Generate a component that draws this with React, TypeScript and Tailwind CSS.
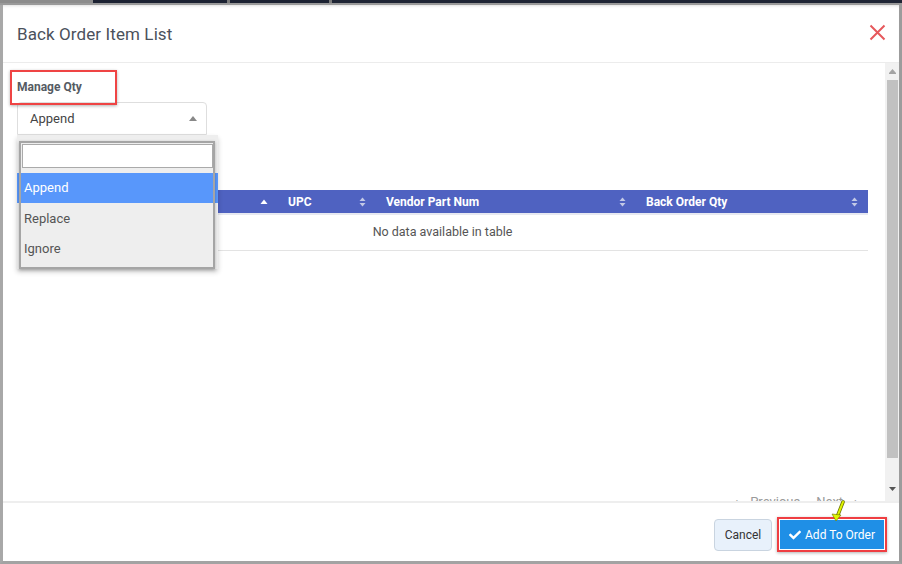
import { FaCheck } from "react-icons/fa";

function SortBoth() {
  return (
    <svg width="7" height="10" viewBox="0 0 7 10" className="shrink-0">
      <path d="M3.5 0.5 L6.5 4 L0.5 4 Z" fill="#c3c9e6" />
      <path d="M3.5 9.5 L6.5 6 L0.5 6 Z" fill="#c3c9e6" />
    </svg>
  );
}

function SortUp() {
  return (
    <svg width="8" height="6" viewBox="0 0 8 6" className="shrink-0">
      <path d="M4 0.5 L7.5 5 L0.5 5 Z" fill="#ffffff" />
    </svg>
  );
}

const columns = [
  { label: "", width: "w-[261px]", up: true },
  { label: "UPC", width: "w-[98px]", up: false },
  { label: "Vendor Part Num", width: "w-[260px]", up: false },
  { label: "Back Order Qty", width: "flex-1", up: false },
];

export default function App() {
  return (
    <div className="relative w-[902px] h-[564px] flex flex-col bg-white overflow-hidden font-['Roboto','Liberation_Sans',sans-serif]">
      {/* screen strip above the modal */}
      <div className="h-[3px] flex shrink-0">
        <div className="w-[93px] bg-[#8c8c8c]" />
        <div className="w-[134px] bg-[#1c2232]" />
        <div className="w-[3px] bg-[#7a7a7a]" />
        <div className="w-[99px] bg-[#1c2232]" />
        <div className="w-[3px] bg-[#7a7a7a]" />
        <div className="flex-1 bg-[#1f2535]" />
      </div>
      <div className="h-[2px] bg-[#9a9a9a] shrink-0" />

      <div className="flex-1 flex flex-col border-l-[3px] border-r-[3px] border-b-[3px] border-l-[#a8a8a8] border-r-[#9c9c9c] border-b-[#a3a3a3] min-h-0">
        {/* header */}
        <div className="h-[58px] shrink-0 flex items-center justify-between pt-[2px] pl-[14px] pr-[13px] border-b border-[#ececec] shadow-[inset_0_3px_3px_-2px_rgba(0,0,0,0.12)]">
          <h1 className="text-[17px] text-[#4b515c] tracking-[0.1px]">Back Order Item List</h1>
          <svg width="17" height="17" viewBox="0 0 17 17" className="mt-[-4px]">
            <path d="M1.5 1.5 L15.5 15.5 M15.5 1.5 L1.5 15.5" stroke="#e6585c" strokeWidth="2" />
          </svg>
        </div>

        {/* body */}
        <div className="relative h-[438px] shrink-0 flex overflow-hidden">
          <div className="flex-1 flex flex-col pl-[14px] pr-[16px] pt-[16px]">
            <div className="h-[16px] text-[12px] font-bold text-[#555b63] leading-[16px]">Manage Qty</div>

            <div className="relative mt-[7px] w-[190px]">
              <div className="h-[33px] flex items-center justify-between pl-[12px] pr-[9px] border border-[#dedede] rounded-t-[4px] bg-white">
                <span className="text-[13px] text-[#444]">Append</span>
                <svg width="8" height="5" viewBox="0 0 8 5">
                  <path d="M4 0 L8 5 L0 5 Z" fill="#888" />
                </svg>
              </div>

              {/* open dropdown */}
              <div className="absolute left-0 top-full z-20 w-[201px] h-[134px] bg-[#eeeeee] shadow-[0_3px_5px_rgba(0,0,0,0.2)] pt-[9px]">
                <div className="mx-[5px] h-[24px] bg-white border border-[#aaaaaa]" />
                <div className="mt-[5px] h-[30px] flex items-center pl-[7px] bg-[#5897fb] text-white text-[13px]">Append</div>
                <div className="h-[31px] flex items-center pl-[7px] text-[#555] text-[13px]">Replace</div>
                <div className="h-[30px] flex items-center pl-[7px] text-[#555] text-[13px]">Ignore</div>
                <div className="absolute left-[2px] top-[6px] right-[3px] bottom-0 border-2 border-[#a5a5a5] shadow-[0_1px_3px_rgba(0,0,0,0.25)] pointer-events-none" />
              </div>
            </div>

            {/* table */}
            <div className="mt-[55px] w-[851px]">
              <div className="h-[23px] flex bg-[#4f62c1] text-white text-[12px] font-bold">
                {columns.map((c, i) => (
                  <div key={i} className={`${c.width} flex items-center justify-between pl-[10px] pr-[10px]`}>
                    <span>{c.label}</span>
                    {c.up ? <SortUp /> : <SortBoth />}
                  </div>
                ))}
              </div>
              <div className="h-[2px] bg-[#e7e9f1]" />
              <div className="h-[36px] flex items-center justify-center text-[12.5px] text-[#555] border-b border-[#e3e3e3]">
                No data available in table
              </div>
            </div>

            <div className="mt-[236px] w-[851px] h-[2px] bg-[#e4e4e4]" />
            <div className="mt-[5px] w-[851px] flex justify-end items-baseline pr-[10px] text-[13px] text-[#9a9a9a]">
              <span>‹</span>
              <span className="ml-[12px]">Previous</span>
              <span className="ml-[16px]">Next</span>
              <span className="ml-[11px]">›</span>
            </div>
          </div>

          {/* scrollbar */}
          <div className="w-[14px] shrink-0 bg-[#f1f1f1] flex flex-col items-center">
            <div className="h-[17px] flex items-center justify-center">
              <svg width="7" height="5" viewBox="0 0 7 5">
                <path d="M3.5 0 L7 4 L0 4 Z" fill="#a3a3a3" />
                <rect x="0" y="4" width="7" height="1" fill="#a3a3a3" />
              </svg>
            </div>
            <div className="w-[11px] h-[378px] bg-[#c1c1c1]" />
            <div className="flex-1" />
            <div className="h-[20px] flex items-start justify-center pt-[6px]">
              <svg width="7" height="4" viewBox="0 0 7 4">
                <path d="M0 0 L7 0 L3.5 4 Z" fill="#555" />
              </svg>
            </div>
          </div>

          {/* annotation around label */}
          <div className="absolute left-[7px] top-[7px] w-[107px] h-[35px] border-2 border-[#ef4444] shadow-[0_1px_3px_rgba(0,0,0,0.3)] pointer-events-none" />
        </div>

        {/* footer */}
        <div className="flex-1 flex items-center justify-end gap-[5px] pt-[5px] pr-[12px] border-t-2 border-[#eeeeee]">
          <button className="h-[32px] w-[58px] rounded-[4px] bg-[#e8f1fb] border border-[#c9d4e0] text-[12px] text-[#333]">
            Cancel
          </button>
          <div className="border-2 border-[#ef3e42] p-px shadow-[0_1px_3px_rgba(0,0,0,0.3)]">
            <button className="h-[29px] w-[104px] flex items-center justify-center gap-[4px] bg-[#1f8fe6] text-white text-[12px]">
              <FaCheck className="w-[12px] h-[12px]" />
              Add To Order
            </button>
          </div>
        </div>
      </div>

      {/* pointer arrow annotation */}
      <svg className="absolute left-[828px] top-[500px] z-30" width="20" height="24" viewBox="0 0 20 24">
        <path d="M15 2 L9.5 16" stroke="#6b7200" strokeWidth="3.5" strokeLinecap="round" />
        <path d="M15 2 L9.5 16" stroke="#dff500" strokeWidth="2" strokeLinecap="round" />
        <path d="M4 14 L8 21 L13 15 Z" fill="#dff500" stroke="#6b7200" strokeWidth="0.6" />
      </svg>
    </div>
  );
}
